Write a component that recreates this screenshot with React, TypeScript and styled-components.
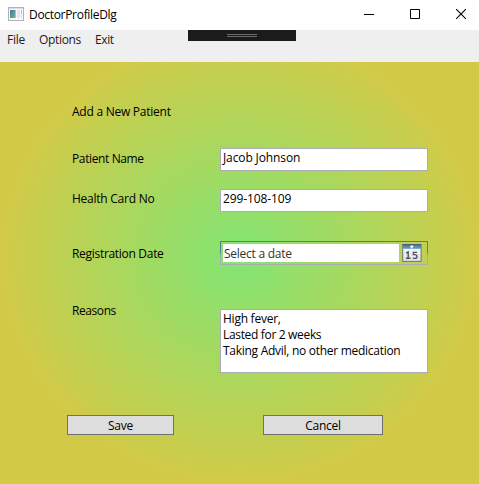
import React from "react";
import styled, { createGlobalStyle } from "styled-components";

const GlobalStyle = createGlobalStyle`
  * { box-sizing: border-box; }
  body { margin: 0; overflow: hidden; }
`;

const Window = styled.main`
  width: 479px;
  height: 484px;
  display: flex;
  flex-direction: column;
  font: 12px/16px "Open Sans", "Noto Sans", sans-serif;
  color: #000;
  background: #fff;
  overflow: hidden;
`;

const TitleBar = styled.header`
  flex: none;
  height: 30px;
  display: flex;
  align-items: flex-start;
  padding: 7px 0 0 8px;
`;

const Text = styled.span<{ $track?: number }>`
  white-space: pre;
  letter-spacing: ${(p) => p.$track ?? -0.25}px;
`;

const Title = styled(Text)`
  margin-left: 5px;
  flex: 1;
`;

const WindowControls = styled.div`
  display: flex;
  margin: -7px -5px 0 0;
`;

const ControlButton = styled.button`
  width: 46px;
  height: 28px;
  padding: 0;
  border: 0;
  background: none;
  display: flex;
  align-items: center;
  justify-content: center;
`;

const Client = styled.div`
  flex: 1;
  display: flex;
  flex-direction: column;
  background: radial-gradient(ellipse closest-side at center, #82e574 0%, #d2ca47 100%);
`;

const MenuBar = styled.nav`
  position: relative;
  flex: none;
  height: 32px;
  padding: 2px 7px;
  display: flex;
  gap: 14px;
  background: #efefef;
  color: #212121;
`;

const DebugHandle = styled.div`
  position: absolute;
  top: 0;
  left: 188px;
  width: 108px;
  height: 11px;
  padding-top: 4px;
  display: flex;
  flex-direction: column;
  align-items: center;
  gap: 1px;
  background: #1b1b1c;
`;

const GripLine = styled.i`
  width: 30px;
  height: 1px;
  background: #6d6a6d;
`;

const Form = styled.form`
  display: flex;
  flex-direction: column;
  padding: 42px 51px 0 72px;
`;

const Row = styled.div<{ $gap: number; $labelTop: number }>`
  display: grid;
  grid-template-columns: 148px 208px;
  align-items: start;
  margin-top: ${(p) => p.$gap}px;
  > :first-child { margin-top: ${(p) => p.$labelTop}px; }
`;

const Field = styled.div<{ $height: number }>`
  height: ${(p) => p.$height}px;
  border: 1px solid #abadb3;
  background: #fff;
  padding: 1px 2px;
  display: flex;
  flex-direction: column;
`;

const DatePicker = styled.div`
  height: 24px;
  display: flex;
  gap: 3px;
  padding: 2px;
  border: 1px solid;
  border-image: linear-gradient(#66778a, #66788a 45%, #a3a9b3 60%, #abadb3) 1;
`;

const DateText = styled.div`
  width: 176px;
  height: 18px;
  padding: 2px 1px 0;
  background: #fff;
  color: #333;
  display: flex;
`;

const Actions = styled.div`
  display: flex;
  gap: 89px;
  margin: 42px 0 0 -5px;
`;

const ActionButton = styled.button<{ $width: number }>`
  width: ${(p) => p.$width}px;
  height: 20px;
  padding: 2px 0 0;
  border: 1px solid #707070;
  background: #ddd;
  color: #000;
  font: inherit;
  display: flex;
  justify-content: center;
  align-items: flex-start;
`;

const AppIcon = () => (
  <svg width="16" height="14" viewBox="0 0 16 14" shapeRendering="crispEdges">
    <defs>
      <linearGradient id="pane" x2="1" y2="1">
        <stop stopColor="#4079a8" />
        <stop offset="1" stopColor="#69b98a" />
      </linearGradient>
    </defs>
    <path fill="#b1b3ba" d="M0 0h16v14H0z" />
    <path fill="#f7f8f9" d="M1 1h14v12H1z" />
    <path fill="#d9dce2" d="M1 1h14v1H1z" />
    <path fill="url(#pane)" d="M2 3h5v8H2z" />
    <path fill="#9fc6c0" d="M7 3h1v8H7z" />
    <path fill="#e4e6e8" d="M9 3h3v8H9z" />
    <path fill="#a9cfbd" d="M13 3h1v4h-1z" />
    <path fill="#e3e6e8" d="M13 7h1v4h-1z" />
  </svg>
);

const CalendarIcon = () => (
  <svg width="20" height="18" viewBox="0 0 20 18">
    <defs>
      <linearGradient id="header" x2="0" y2="1">
        <stop stopColor="#426f9b" />
        <stop offset="1" stopColor="#6b9fca" />
      </linearGradient>
      <linearGradient id="paper" x2="0" y2="1">
        <stop stopColor="#fff" />
        <stop offset="1" stopColor="#d9dce4" />
      </linearGradient>
    </defs>
    <rect x=".7" y=".5" width="18.4" height="16.9" fill="url(#paper)" stroke="#70747b" />
    <rect x=".7" y=".3" width="18.4" height="4.5" fill="url(#header)" />
    <path stroke="#4d5156" d="M.3.5h19.2" strokeWidth=".6" />
    <path stroke="#fff" strokeWidth="1.3" d="M8.3 2.7h3M9.8 1.2v3" />
    <g fill="none" stroke="#51555b" strokeWidth="1.4">
      <path d="M4.2 9 6.2 8v6.3M4 14.3h4.4" />
      <path d="M15 8.4h-3.6v2.2h1.4c2.9 0 2.9 3.8 0 3.8h-1.9" />
    </g>
  </svg>
);

export default function App() {
  return (
    <>
      <GlobalStyle />
      <Window>
        <TitleBar>
          <AppIcon />
          <Title $track={-0.31}>DoctorProfileDlg</Title>
          <WindowControls>
            <ControlButton aria-label="Minimize">
              <svg width="10" height="10"><path d="M0 5.5h10" stroke="#000" /></svg>
            </ControlButton>
            <ControlButton aria-label="Maximize">
              <svg width="10" height="10"><path d="M.5.5h9v9h-9z" fill="none" stroke="#000" /></svg>
            </ControlButton>
            <ControlButton aria-label="Close">
              <svg width="10" height="10"><path d="m0 0 10 10M10 0 0 10" stroke="#000" strokeWidth="1.1" /></svg>
            </ControlButton>
          </WindowControls>
        </TitleBar>
        <Client>
          <MenuBar>
            <Text>File</Text>
            <Text $track={-0.33}>Options</Text>
            <Text $track={-0.4}>Exit</Text>
            <DebugHandle><GripLine /><GripLine /></DebugHandle>
          </MenuBar>
          <Form>
            <Text>Add a New Patient</Text>
            <Row $gap={28} $labelTop={3}>
              <Text $track={-0.38}>Patient Name</Text>
              <Field $height={23}><Text $track={-0.12}>Jacob Johnson</Text></Field>
            </Row>
            <Row $gap={18} $labelTop={2}>
              <Text>Health Card No</Text>
              <Field $height={23}><Text $track={-0.12}>299-108-109</Text></Field>
            </Row>
            <Row $gap={29} $labelTop={5}>
              <Text $track={-0.3}>Registration Date</Text>
              <DatePicker>
                <DateText><Text>Select a date</Text></DateText>
                <CalendarIcon />
              </DatePicker>
            </Row>
            <Row $gap={44} $labelTop={-6}>
              <Text $track={-0.42}>Reasons</Text>
              <Field $height={64}>
                <Text>High fever,</Text>
                <Text $track={-0.33}>Lasted for 2 weeks</Text>
                <Text $track={-0.28}>Taking Advil, no other medication</Text>
              </Field>
            </Row>
            <Actions>
              <ActionButton type="button" $width={107}><Text>Save</Text></ActionButton>
              <ActionButton type="button" $width={120}><Text>Cancel</Text></ActionButton>
            </Actions>
          </Form>
        </Client>
      </Window>
    </>
  );
}
